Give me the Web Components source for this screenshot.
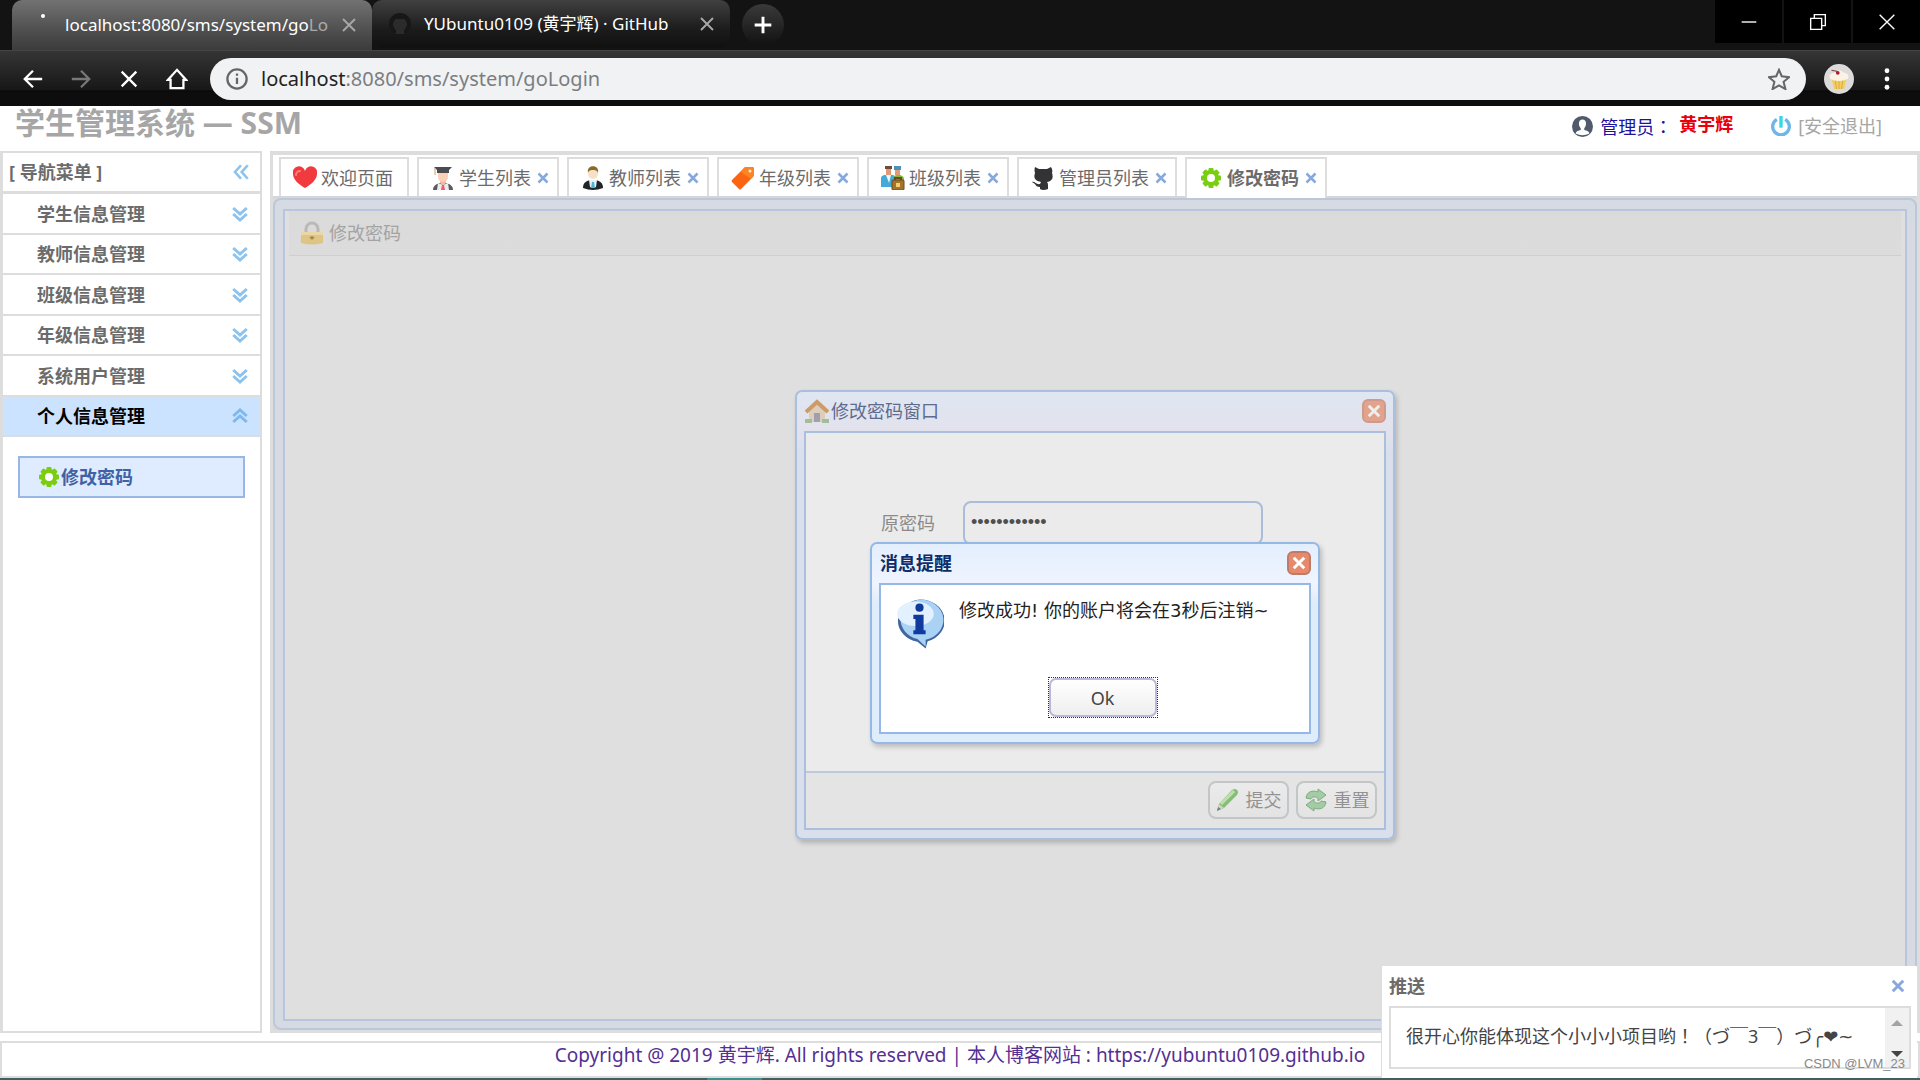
<!DOCTYPE html>
<html lang="zh-CN">
<head>
<meta charset="utf-8">
<title>学生管理系统</title>
<style>
    html, body {
        margin: 0;
        height: 100%;
    }

    body {
        display: flex;
        flex-direction: column;
        overflow: hidden;
        background: #fff;
        font-family: "Noto Sans", "Noto Sans CJK SC", sans-serif;
        font-size: 18px;
        line-height: 24px;
        color: #6b6b6b;
    }

    .workspace {
        flex: 1;
        min-height: 0;
        display: flex;
        gap: 8px;
    }

    work-area {
        flex: 1;
        min-width: 0;
    }
</style>
</head>
<body>
<browser-chrome></browser-chrome>
<app-header></app-header>
<div class="workspace">
    <side-nav heading="[ 导航菜单 ]">
        <nav-group>学生信息管理</nav-group>
        <nav-group>教师信息管理</nav-group>
        <nav-group>班级信息管理</nav-group>
        <nav-group>年级信息管理</nav-group>
        <nav-group>系统用户管理</nav-group>
        <nav-group open>个人信息管理</nav-group>
        <nav-link icon="gear">修改密码</nav-link>
    </side-nav>
    <work-area>
        <work-tab slot="tabs" icon="heart" fixed>欢迎页面</work-tab>
        <work-tab slot="tabs" icon="student">学生列表</work-tab>
        <work-tab slot="tabs" icon="teacher">教师列表</work-tab>
        <work-tab slot="tabs" icon="tag">年级列表</work-tab>
        <work-tab slot="tabs" icon="group">班级列表</work-tab>
        <work-tab slot="tabs" icon="cat">管理员列表</work-tab>
        <work-tab slot="tabs" icon="gear" active>修改密码</work-tab>
        <password-window></password-window>
    </work-area>
</div>
<app-footer></app-footer>
<push-message></push-message>

<script>
const ICONS = {
    heart: `<path d="M12 22C5 18 0 13 0 8a6 6 0 0 1 12-3A6 6 0 0 1 24 8c0 5-5 10-12 14z" fill="#f03a3e"/><path d="M3 9a4 4 0 0 1 4-4" fill="none" stroke="#ff7f7c" stroke-width="2" stroke-linecap="round"/>`,
    student: `<path d="M2 24c0-4 3-6 7-7h6c4 1 7 3 7 7z" fill="#5c5c60"/><path d="M7 17l5 2 5-2 1 7H6z" fill="#ececf0"/><path d="M9 13h6v4l-3 3-3-3z" fill="#f3b9a0"/><path d="M11 19h2l1 5h-4z" fill="#e8606a"/><path d="M7 6h10v4q0 6-5 6t-5-6z" fill="#fbcfb8"/><path d="M3 1h18l-3 3v3H6V4z" fill="#4b4c50"/><path d="M4 2v7" stroke="#d39a72"/>`,
    teacher: `<path d="M2 22c0-5 3-7 7-8h6c4 1 7 3 7 8q-10 4-20 0z" fill="#222428"/><path d="M8 14h8l-1 7q-3 2-6 0z" fill="#e3f3f8"/><path d="M11 16h2l1 6h-4z" fill="#4fb3d6"/><circle cx="12" cy="8" r="5" fill="#f6e0c8"/><path d="M7 7c-2-9 12-9 10 0-1-3-3-3-5-3S8 4 7 7z" fill="#8c6a25"/>`,
    tag: `<path d="M13 2q1-1 2-1l6 0q2 0 2 2v6q0 1-1 2L10 23q-1 1-2 0L1 16q-1-1 0-2z" fill="#fb6411"/><path d="M13 2q1-1 2-1l6 0q2 0 2 2v6l-3 4-10-7z" fill="#fd8424"/><circle cx="19" cy="5" r="1.500" fill="#ffe9c9"/>`,
    group: `<path d="M5 1h5v8H5z" fill="#e39a74"/><path d="M4 0h7v3H4z" fill="#6f4b3b"/><path d="M14 1h5v8h-5z" fill="#e39a74"/><path d="M13 0h7v4h-7z" fill="#4b93b5"/><path d="M0 21v-9q0-2 3-3h9q3 1 3 3v9z" fill="#42a9d8"/><path d="M5 9h5l-2 8z" fill="#eef8fb"/><path d="M13 12q0-3 3-3h3q4 1 4 4v3H13z" fill="#84b83c"/><rect x="11" y="14" width="12" height="10" rx="1" fill="#a5742c" stroke="#6a4a1c"/><path d="M14 14v-2h6v2" fill="none" stroke="#6a4a1c" stroke-width="2"/><rect x="15" y="17" width="4" height="4" fill="#f2d06b"/>`,
    cat: `<path d="M4 1l4 2h8l4-2q2 3 1 6c2 6-1 8-5 9q1 1 1 3v4q-5 2-8 0v-2c-3 0-4-1-5-3l-3-2c3-1 4 3 8 2l1-2c-5-1-8-3-6-9q-1-3 0-6z" fill="#333335"/>`,
    gear: `<g fill="#7ace10"><circle cx="12" cy="12" r="8"/><rect x="9.500" y="2" width="5" height="20" rx="1"/><rect x="2" y="9.500" width="20" height="5" rx="1"/><rect x="9.500" y="2" width="5" height="20" rx="1" transform="rotate(45 12 12)"/><rect x="9.500" y="2" width="5" height="20" rx="1" transform="rotate(-45 12 12)"/></g><circle cx="12" cy="12" r="4" fill="#fff"/>`,
    lock: `<path d="M6 12V8a6 6 0 0 1 12 0v4" fill="none" stroke="#b9b9ba" stroke-width="3"/><path d="M1 11h22v11q-11 3-22 0z" fill="#dfc585"/><path d="M1 11h22v3H1z" fill="#ead7a4"/><path d="M12 15v4M10 16l2 2 2-2" stroke="#9f8a58" stroke-width="1.500" fill="none"/>`,
    house: `<path d="M4 12v11h16V12l-8-8z" fill="#dccdbd"/><path d="M1 13L12 3l11 10" fill="none" stroke="#cc9c66" stroke-width="4"/><rect x="9" y="14" width="6" height="9" fill="#a0a0aa"/><path d="M0 20h7v4H0zM17 20h7v4h-7z" fill="#a2bd98"/>`,
    pencil: `<path d="M1 23l2-7L16 2q3-2 5 0t0 5L8 20z" fill="#86bd7a"/><path d="M5 16L18 3" stroke="#bfe0ae" stroke-width="3"/><path d="M1 23l2-7 5 4z" fill="#d6d3b8"/><path d="M1 23l1-4 3 2z" fill="#66829a"/>`,
    refresh: `<path d="M2 10C3 3 9 2 14 4V1l8 6-8 6v-3c-4-2-6-1-7 1z" fill="#a3cba4" stroke="#7fab84"/><path d="M22 14c-1 7-7 8-12 6v3l-8-6 8-6v3c4 2 6 1 7-1z" fill="#a3cba4" stroke="#7fab84"/>`,
    user: `<circle cx="12" cy="12" r="12" fill="#515a6c"/><path d="M4 20c1-3 3-3 6-4v-2c-3-3-3-10 2-10s5 7 2 10v2c3 1 5 1 6 4q-8 4-16 0z" fill="#fff"/>`,
    power: `<path d="M7 4a10 10 0 1 0 10 0" fill="none" stroke="#6cb6ea" stroke-width="4"/><path d="M12 0v14" stroke="#35d6e6" stroke-width="4"/>`,
    info: `<path d="M12 0a12 10.500 0 0 1 4 20.500l-1 3.500-4-3.300A12 10.500 0 0 1 12 0z" fill="#41669f"/><path d="M12 0a11.500 10 0 0 1 3 19.700v3.300l-4-3.600A11.500 10 0 0 1 12 0z" fill="#a9d2f5"/><ellipse cx="10" cy="7" rx="9" ry="6" fill="#e2f1fd"/><circle cx="12" cy="4" r="2" fill="#103a9e"/><path d="M9 7.500h5V15h1v2H9v-2h1V9.500H9z" fill="#103a9e"/>`,
    close: `<path d="M3 3l18 18M21 3L3 21" stroke="currentColor" stroke-width="5"/>`,
    thinclose: `<path d="M4 4l16 16M20 4L4 20" stroke="currentColor" stroke-width="2.500"/>`,
    hair: `<path d="M4 4l16 16M20 4L4 20" stroke="currentColor" stroke-width="1.500"/>`,
    minus: `<path d="M4 12h16" stroke="currentColor" stroke-width="1.500"/>`,
    restore: `<path d="M4 8h12v12H4zM8 8V4h12v12h-4" fill="none" stroke="currentColor" stroke-width="1.500"/>`,
    plus: `<path d="M12 2v20M2 12h20" stroke="currentColor" stroke-width="3.500"/>`,
    back: `<path d="M22 12H4M12 3l-9 9 9 9" fill="none" stroke="currentColor" stroke-width="2.500"/>`,
    forward: `<path d="M2 12h18M12 3l9 9-9 9" fill="none" stroke="currentColor" stroke-width="2.500"/>`,
    home: `<path d="M2 13L12 2l10 11h-3v9H5v-9z" fill="none" stroke="currentColor" stroke-width="2.500"/>`,
    about: `<circle cx="12" cy="12" r="10.500" fill="none" stroke="currentColor" stroke-width="2.500"/><path d="M12 10.500v7M12 6v2.500" stroke="currentColor" stroke-width="2.500"/>`,
    star: `<path d="M12 2l3 7 8 1-6 5 2 8-7-4-7 4 2-8-6-5 8-1z" fill="none" stroke="currentColor" stroke-width="2.200"/>`,
    dots: `<g fill="currentColor"><circle cx="12" cy="3" r="2.600"/><circle cx="12" cy="12" r="2.600"/><circle cx="12" cy="21" r="2.600"/></g>`,
    down: `<path d="M3 4l9 8 9-8M3 12l9 8 9-8" fill="none" stroke="#8cc3ee" stroke-width="4"/>`,
    up: `<path d="M3 12l9-8 9 8M3 20l9-8 9 8" fill="none" stroke="#7fb8ec" stroke-width="4"/>`,
    left: `<path d="M12 3l-8 9 8 9M21 3l-8 9 8 9" fill="none" stroke="#8cc3ee" stroke-width="3.500"/>`,
    octo: `<circle cx="12" cy="12" r="11" fill="#171717"/><path d="M8 22v-4c-4-3-4-9 0-11h8c4 2 4 8 0 11v4z" fill="#2b2b2b"/>`,
    cupcake: `<circle cx="12" cy="12" r="12" fill="#dcdadb"/><path d="M6 12h12l-2 8H8z" fill="#f3cf62"/><path d="M9 13l1 7M12 13v7M15 13l-1 7" stroke="#d9a93f" stroke-width=".8"/><path d="M5 12q-2-4 3-5 4-4 8 0 5 1 3 5-7 3-14 0z" fill="#fbf3e4"/><circle cx="11" cy="7" r="1.500" fill="#b31b34"/><path d="M11 6L6 5" stroke="#704a3a"/>`
};

class UiIcon extends HTMLElement {
    constructor() {
        super();
        this.attachShadow({ mode: "open" });
    }

    connectedCallback() {
        this.shadowRoot.innerHTML = `
        <style>
          :host { display: block; flex: none; width: 24px; height: 24px; }
          svg { display: block; width: 100%; height: 100%; }
        </style>
        <svg viewBox="0 0 24 24" aria-hidden="true">${ICONS[this.getAttribute("name")]}</svg>`;
    }
}
customElements.define("ui-icon", UiIcon);

const BUTTON_RESET = `
  * { box-sizing: border-box; }
  button {
    margin: 0; padding: 0; border: 0; background: none;
    font: inherit; color: inherit; cursor: pointer;
  }`;

class BrowserChrome extends HTMLElement {
    constructor() {
        super();
        this.attachShadow({ mode: "open" }).innerHTML = `
        <style>
          ${BUTTON_RESET}
          :host { display: block; flex: none; color: #fff; background: #131313; }
          .tabs { display: flex; height: 50px; padding-left: 12px; }
          .tab {
            display: flex; align-items: center; width: 360px; height: 50px; padding: 0 14px 0 20px;
            border-radius: 10px 10px 0 0; overflow: hidden;
            background: linear-gradient(#727272, #4a4a4a 70%, #3c3c3c);
          }
          .tab.idle { width: 358px; height: 48px; border-radius: 10px; background: linear-gradient(#404040, #1c1c1c 60%, #101010); }
          .label { flex: 1; white-space: nowrap; font-size: 17px; line-height: 24px; }
          .fade { opacity: .5; }
          .favicon { width: 24px; height: 24px; margin-right: 10px; }
          .idle .favicon { margin-right: 12px; margin-left: -4px; }
          .active .favicon::before { content: ""; display: block; width: 4px; height: 4px; margin: 1px 9px; border-radius: 50%; background: #fff; }
          .tab button { margin-left: 12px; color: #a8a8a8; }
          .tab ui-icon.x { width: 18px; height: 18px; }
          .new { align-self: center; width: 42px; height: 42px; margin-left: 12px; border-radius: 50%; background: linear-gradient(#3a3a3a, #111); display: flex; align-items: center; justify-content: center; }
          .new ui-icon { width: 20px; height: 20px; }
          .window { display: flex; gap: 2px; height: 43px; margin-left: auto; }
          .window button { width: 67px; background: #000; display: flex; align-items: center; justify-content: center; }
          .window ui-icon { width: 22px; height: 22px; }
          .toolbar {
            display: flex; align-items: center; height: 56px; padding: 0 20px;
            border-top: 1px solid #454545;
            background: linear-gradient(#353535, #171717 39px, #060606 40px, #0d0d0d 41px);
          }
          .toolbar > button { width: 26px; margin-right: 22px; display: flex; justify-content: center; }
          .toolbar ui-icon { width: 22px; height: 22px; }
          .toolbar button.forward { color: #777; }
          .toolbar > button.home { margin-right: 20px; }
          .address {
            flex: 1; display: flex; align-items: center; height: 42px; margin-right: 18px; padding: 0 16px;
            border-radius: 21px; background: #f1f2f3; color: #666;
          }
          .url { flex: 1; margin-left: 13px; font-size: 20px; line-height: 28px; color: #7a7e83; }
          .url b { font-weight: 400; color: #222; }
          .toolbar > button.avatar { width: 30px; margin-right: 20px; }
          .toolbar > button.more { margin-right: 0; }
          .avatar ui-icon { width: 30px; height: 30px; }
        </style>
        <div class="tabs">
          <div class="tab active">
            <span class="favicon"></span>
            <span class="label">localhost:8080/sms/system/go<span class="fade">Lo</span></span>
            <button aria-label="Close tab"><ui-icon class="x" name="thinclose"></ui-icon></button>
          </div>
          <div class="tab idle">
            <ui-icon class="favicon" name="octo"></ui-icon>
            <span class="label">YUbuntu0109 (黄宇辉) · GitHub</span>
            <button aria-label="Close tab"><ui-icon class="x" name="thinclose"></ui-icon></button>
          </div>
          <button class="new" aria-label="New tab"><ui-icon name="plus"></ui-icon></button>
          <div class="window">
            <button aria-label="Minimize"><ui-icon name="minus"></ui-icon></button>
            <button aria-label="Restore"><ui-icon name="restore"></ui-icon></button>
            <button aria-label="Close"><ui-icon name="hair"></ui-icon></button>
          </div>
        </div>
        <div class="toolbar">
          <button aria-label="Back"><ui-icon name="back"></ui-icon></button>
          <button class="forward" aria-label="Forward"><ui-icon name="forward"></ui-icon></button>
          <button aria-label="Stop"><ui-icon name="thinclose"></ui-icon></button>
          <button class="home" aria-label="Home"><ui-icon name="home"></ui-icon></button>
          <div class="address">
            <ui-icon name="about"></ui-icon>
            <span class="url"><b>localhost</b>:8080/sms/system/goLogin</span>
            <button aria-label="Bookmark"><ui-icon name="star"></ui-icon></button>
          </div>
          <button class="avatar" aria-label="Profile"><ui-icon name="cupcake"></ui-icon></button>
          <button class="more" aria-label="Menu"><ui-icon name="dots"></ui-icon></button>
        </div>`;
    }
}
customElements.define("browser-chrome", BrowserChrome);

class AppHeader extends HTMLElement {
    constructor() {
        super();
        this.attachShadow({ mode: "open" }).innerHTML = `
        <style>
          :host { display: flex; flex: none; align-items: center; height: 45px; padding: 0 38px 0 15px; }
          h1 { flex: 1; margin: 0 0 12px; font-size: 30px; line-height: 36px; font-weight: 700; color: #a6a6a6; }
          .user, a { display: flex; align-items: center; gap: 7px; margin-bottom: 5px; }
          .user { margin-right: 38px; color: #20129b; }
          .user ui-icon { width: 21px; height: 21px; }
          .wide { font-family: "Noto Sans CJK JP", sans-serif; }
          strong { margin-bottom: 4px; color: #e8000c; }
          a { color: #a6a6a6; text-decoration: none; }
          a ui-icon { width: 20px; height: 20px; }
        </style>
        <h1>学生管理系统 — SSM</h1>
        <div class="user"><ui-icon name="user"></ui-icon><span>管理员<span class="wide" lang="ja">：</span></span><strong>黄宇辉</strong></div>
        <a href="#logout"><ui-icon name="power"></ui-icon>[安全退出]</a>`;
    }
}
customElements.define("app-header", AppHeader);

class SideNav extends HTMLElement {
    constructor() {
        super();
        this.attachShadow({ mode: "open" });
    }

    connectedCallback() {
        this.shadowRoot.innerHTML = `
        <style>
          ${BUTTON_RESET}
          :host { display: block; box-sizing: border-box; flex: none; width: 262px; border: 2px solid #ddd; border-left-width: 3px; background: #fff; }
          header { display: flex; align-items: center; justify-content: space-between; height: 41px; padding: 0 10px 0 6px; border-bottom: 3px solid #ddd; font-weight: 700; }
          ui-icon { width: 18px; height: 18px; }
        </style>
        <header>${this.getAttribute("heading")}<button aria-label="收起菜单"><ui-icon name="left"></ui-icon></button></header>
        <nav><slot></slot></nav>`;
    }
}
customElements.define("side-nav", SideNav);

class NavGroup extends HTMLElement {
    constructor() {
        super();
        this.attachShadow({ mode: "open" });
    }

    connectedCallback() {
        const open = this.hasAttribute("open");
        this.shadowRoot.innerHTML = `
        <style>
          ${BUTTON_RESET}
          :host { display: block; }
          button { display: flex; align-items: center; justify-content: space-between; width: 100%; height: 41px; padding: 0 11px 0 34px; border-bottom: 2px solid #ddd; font-weight: 700; }
          :host(:nth-of-type(even)) button { height: 40px; }
          :host([open]) button { background: #cbe3ff; color: #000; border-color: #d6dde6; }
          ui-icon { width: 18px; height: 18px; }
        </style>
        <button aria-expanded="${open}"><slot></slot><ui-icon name="${open ? "up" : "down"}"></ui-icon></button>`;
    }
}
customElements.define("nav-group", NavGroup);

class NavLink extends HTMLElement {
    constructor() {
        super();
        this.attachShadow({ mode: "open" });
    }

    connectedCallback() {
        this.shadowRoot.innerHTML = `
        <style>
          :host { display: block; padding: 19px 15px; }
          a { display: flex; align-items: center; height: 38px; padding-left: 17px; border: 2px solid #99b7e6; background: #dfebff; color: #3f62a5; font-weight: 700; text-decoration: none; }
        </style>
        <a href="#password"><ui-icon name="${this.getAttribute("icon")}"></ui-icon><slot></slot></a>`;
    }
}
customElements.define("nav-link", NavLink);

class WorkTab extends HTMLElement {
    constructor() {
        super();
        this.attachShadow({ mode: "open" });
    }

    connectedCallback() {
        const close = this.hasAttribute("fixed")
            ? ""
            : `<button class="close" aria-label="关闭"><ui-icon name="close"></ui-icon></button>`;
        this.shadowRoot.innerHTML = `
        <style>
          ${BUTTON_RESET}
          :host { display: flex; box-sizing: border-box; align-items: center; height: 39px; padding: 0 8px 0 12px; border: 2px solid #ddd; border-bottom: 0; background: #fff; }
          :host([fixed]) { padding-right: 14px; }
          :host([active]) { height: 41px; padding-bottom: 2px; font-weight: 700; }
          .pick { display: flex; align-items: center; gap: 4px; height: 100%; white-space: nowrap; }
          .close { display: flex; margin-left: 6px; color: #86a8dc; }
          .close ui-icon { width: 12px; height: 12px; }
        </style>
        <button class="pick"><ui-icon name="${this.getAttribute("icon")}"></ui-icon><slot></slot></button>${close}`;
    }
}
customElements.define("work-tab", WorkTab);

class WorkArea extends HTMLElement {
    constructor() {
        super();
        this.attachShadow({ mode: "open" }).innerHTML = `
        <style>
          * { box-sizing: border-box; }
          :host { display: flex; flex-direction: column; box-sizing: border-box; border: 3px solid #ddd; border-top-width: 4px; background: #d9dadc; }
          .tabs { display: flex; align-items: flex-start; gap: 8px; height: 43px; padding: 2px 0 0 6px; background: linear-gradient(#fff 41px, #d3d6da 41px); }
          .page { flex: 1; min-height: 0; display: flex; padding: 9px 8px 7px; border: 2px solid #bcc7da; border-radius: 8px; background: #d6dae3; }
          .panel { flex: 1; display: flex; flex-direction: column; border: 2px solid #b9c5dc; background: #dfdfdf; }
          h2 { display: flex; align-items: center; gap: 5px; height: 45px; margin: 0 4px; padding-left: 11px; border-bottom: 1px solid #cfcfcf; background: linear-gradient(#dadada, #dcdcdc); font-size: 18px; font-weight: 400; color: #a3a3a3; }
          .canvas { flex: 1; position: relative; }
        </style>
        <div class="tabs"><slot name="tabs"></slot></div>
        <div class="page">
          <section class="panel">
            <h2><ui-icon name="lock"></ui-icon>修改密码</h2>
            <div class="canvas"><slot></slot></div>
          </section>
        </div>`;
    }
}
customElements.define("work-area", WorkArea);

// A framed dialog: title bar with a close button, body, optional button row
class FloatWindow extends HTMLElement {
    constructor() {
        super();
        this.attachShadow({ mode: "open" });
    }

    connectedCallback() {
        const icon = this.getAttribute("icon");
        this.shadowRoot.innerHTML = `
        <style>
          ${BUTTON_RESET}
          :host {
            display: flex; flex-direction: column; box-sizing: border-box; padding: 0 7px 8px;
            border: 2px solid #95b8e7; border-radius: 7px; box-shadow: 2px 3px 5px rgba(0, 0, 0, .2);
            background: linear-gradient(#e3eefd, #eff5ff 40px, #dfecfb 60px); color: #0e2d6b;
          }
          :host([dimmed]) { border-color: #a9bfdd; background: linear-gradient(#dfe6f2, #e2e2ec 40px, #d9e0ec 60px); color: #5d6b8f; }
          header { display: flex; align-items: center; gap: 2px; height: 39px; padding-left: 1px; font-weight: 700; }
          :host([dimmed]) header { font-weight: 400; }
          header button { margin-left: auto; width: 24px; height: 24px; border: 2px solid #c17a68; border-radius: 6px; background: #e58a6c; color: #fff; display: flex; align-items: center; justify-content: center; }
          header button ui-icon { width: 14px; height: 14px; }
          :host([dimmed]) header button { border-color: #cf9a8e; background: #e2a38c; color: #eee; }
          .body { flex: 1; border: 2px solid #95b8e7; background: #fff; display: flex; flex-direction: column; color: #333; }
          :host([dimmed]) .body { border-color: #a9bfdd; background: #ebebeb; }
        </style>
        <header>${icon ? `<ui-icon name="${icon}"></ui-icon>` : ""}<span>${this.getAttribute("heading")}</span><button aria-label="关闭"><ui-icon name="close"></ui-icon></button></header>
        <div class="body"><slot></slot></div>`;
    }
}
customElements.define("float-window", FloatWindow);

class PasswordWindow extends HTMLElement {
    constructor() {
        super();
        this.attachShadow({ mode: "open" }).innerHTML = `
        <style>
          ${BUTTON_RESET}
          :host { position: absolute; inset: 0; display: flex; align-items: center; justify-content: center; }
          .stack { position: relative; width: 600px; margin-bottom: 46px; }
          .main { height: 450px; }
          form { flex: 1; display: flex; flex-direction: column; }
          .field { flex: 1; display: flex; align-items: flex-start; padding: 68px 75px 0; }
          label { width: 82px; padding-top: 10px; line-height: 24px; color: #8b8b8b; }
          input { width: 300px; height: 44px; padding: 0 6px; border: 2px solid #aabcd9; border-radius: 8px; background: #ebebeb; color: #4f4f4f; font-family: "Liberation Sans", sans-serif; font-size: 18px; }
          .actions { display: flex; align-items: center; justify-content: flex-end; gap: 7px; height: 57px; padding-right: 7px; border-top: 2px solid #bccadb; background: #e4e4e4; }
          .actions button { display: flex; align-items: center; justify-content: center; gap: 6px; width: 81px; height: 38px; border: 2px solid #c2c6c6; border-radius: 8px; background: linear-gradient(#ebebeb, #e3e3e3); color: #929292; }
          .alert { position: absolute; top: 152px; left: 0; right: 0; width: 450px; min-height: 200px; margin: 0 auto; }
          .message { display: flex; gap: 15px; padding: 14px 14px 13px; color: #222; font-family: "DejaVu Sans", "Noto Sans CJK SC", sans-serif; }
          .message ui-icon { width: 49px; height: 50px; }
          .ok { align-self: center; width: 110px; height: 41px; margin: 15px 0 14px 15px; border: 1px dotted #2a1f8f; color: #444; }
          .ok span { display: block; height: 39px; border: 2px solid #bcb6d8; border-radius: 7px; background: linear-gradient(#fff, #eee); line-height: 36px; }
        </style>
        <div class="stack">
          <float-window class="main" dimmed icon="house" heading="修改密码窗口">
            <form>
              <div class="field">
                <label for="old">原密码</label>
                <input id="old" type="password" value="abcdefghijkl">
              </div>
              <div class="actions">
                <button type="button"><ui-icon name="pencil"></ui-icon>提交</button>
                <button type="button"><ui-icon name="refresh"></ui-icon>重置</button>
              </div>
            </form>
          </float-window>
          <float-window class="alert" heading="消息提醒">
            <div class="message"><ui-icon name="info"></ui-icon><span>修改成功! 你的账户将会在3秒后注销~</span></div>
            <button class="ok"><span>Ok</span></button>
          </float-window>
        </div>`;
    }
}
customElements.define("password-window", PasswordWindow);

class AppFooter extends HTMLElement {
    constructor() {
        super();
        this.attachShadow({ mode: "open" }).innerHTML = `
        <style>
          :host { display: block; flex: none; margin-top: 8px; }
          footer { height: 33px; border: 2px solid #ddd; text-align: center; font-size: 19px; line-height: 24px; color: #552f92; }
          a { color: inherit; text-decoration: none; }
          .taskbar { height: 2px; background: linear-gradient(90deg, #40605f 707px, #36928c 707px, #36928c 762px, #40605f 762px); }
        </style>
        <footer>Copyright @ 2019 黄宇辉. All rights reserved | 本人博客网站 : <a href="#blog">https://yubuntu0109.github.io</a></footer>
        <div class="taskbar"></div>`;
    }
}
customElements.define("app-footer", AppFooter);

class PushMessage extends HTMLElement {
    constructor() {
        super();
        this.attachShadow({ mode: "open" }).innerHTML = `
        <style>
          ${BUTTON_RESET}
          :host { position: fixed; right: 3px; bottom: 2px; width: 536px; padding: 0 6px 9px 7px; box-sizing: border-box; border-left: 1px solid #ddd; background: #fff; }
          header { display: flex; align-items: center; justify-content: space-between; height: 40px; padding-right: 6px; font-weight: 700; }
          header button { display: flex; color: #86a8dc; }
          header ui-icon { width: 14px; height: 14px; }
          .body { display: flex; height: 63px; border: 2px solid #ddd; }
          p { flex: 1; margin: 0; padding: 15px; white-space: nowrap; color: #444; }
          .wide { font-family: "Noto Sans CJK JP", sans-serif; }
          .signs { font-family: "DejaVu Sans", sans-serif; }
          .scroll { display: flex; flex-direction: column; justify-content: space-between; align-items: center; width: 24px; padding: 12px 0 10px; background: #f1f1f1; }
          .scroll::before, .scroll::after { content: ""; border: 6px solid transparent; }
          .scroll::before { border-top: 0; border-bottom-color: #a3a3a3; }
          .scroll::after { border-bottom: 0; border-top-color: #444; }
          small { position: absolute; right: 12px; bottom: 5px; font-family: "Liberation Sans", sans-serif; font-size: 13px; line-height: 18px; color: #888; }
        </style>
        <header>推送<button aria-label="关闭"><ui-icon name="close"></ui-icon></button></header>
        <div class="body"><p>很开心你能体现这个小小小项目哟<span class="wide" lang="ja">！</span>（づ￣3￣）づ<span class="signs">╭❤~</span></p><div class="scroll"></div></div>
        <small>CSDN @LVM_23</small>`;
    }
}
customElements.define("push-message", PushMessage);
</script>
</body>
</html>
